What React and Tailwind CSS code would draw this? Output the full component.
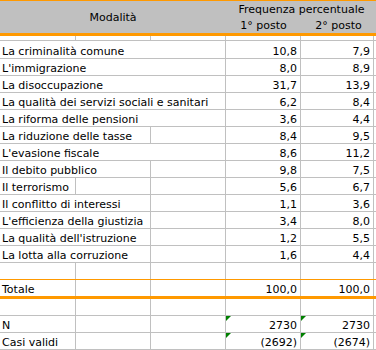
import React from 'react';

const rows = [
  { label: 'La criminalità comune', span: 3, a: '10,8', b: '7,9', tall: true },
  { label: "L'immigrazione", span: 3, a: '8,0', b: '8,9' },
  { label: 'La disoccupazione', span: 3, a: '31,7', b: '13,9' },
  { label: 'La qualità dei servizi sociali e sanitari', span: 3, a: '6,2', b: '8,4' },
  { label: 'La riforma delle pensioni', span: 3, a: '3,6', b: '4,4' },
  { label: 'La riduzione delle tasse', span: 2, a: '8,4', b: '9,5' },
  { label: "L'evasione fiscale", span: 3, a: '8,6', b: '11,2' },
  { label: 'Il debito pubblico', span: 2, a: '9,8', b: '7,5' },
  { label: 'Il terrorismo', span: 1, a: '5,6', b: '6,7' },
  { label: 'Il conflitto di interessi', span: 2, a: '1,1', b: '3,6' },
  { label: "L'efficienza della giustizia", span: 2, a: '3,4', b: '8,0' },
  { label: "La qualità dell'istruzione", span: 2, a: '1,2', b: '5,5' },
  { label: 'La lotta alla corruzione', span: 2, a: '1,6', b: '4,4' },
];

const spanClass = { 1: 'col-span-1', 2: 'col-span-2', 3: 'col-span-3' };

// one spreadsheet row: label (may spill over empty cells), then two number cells
const Row = ({ label = '', span = 1, a = '', b = '', h = 'h-[17px]', line = 'border-b border-[#c0c0c0]', flag = false }) => {
  const fillers = [];
  for (let i = span; i < 3; i++) fillers.push(i);
  return (
    <div className={`grid grid-cols-[76px_75px_75px_75px_73px] ${h} ${line}`}>
      <div className={`${spanClass[span]} border-r border-[#c0c0c0] flex items-end pl-[2px] whitespace-nowrap overflow-visible`}>
        {label}
      </div>
      {fillers.map((i) => (
        <div key={i} className="border-r border-[#c0c0c0]" />
      ))}
      <div className="relative border-r border-[#c0c0c0] flex items-end justify-end pr-[3px]">
        {flag && <span className="absolute left-0 top-0 w-0 h-0 border-t-[5px] border-r-[5px] border-t-[#008000] border-r-transparent" />}
        {a}
      </div>
      <div className="relative border-r border-[#c0c0c0] flex items-end justify-end pr-[3px]">
        {flag && <span className="absolute left-0 top-0 w-0 h-0 border-t-[5px] border-r-[5px] border-t-[#008000] border-r-transparent" />}
        {b}
      </div>
    </div>
  );
};

export default function App() {
  return (
    <div className="w-[376px] h-[350px] bg-white text-black text-[11px] leading-[13px] overflow-hidden" style={{ fontFamily: '"DejaVu Sans", Verdana, sans-serif' }}>
      {/* header */}
      <div className="border-t border-[#ff9900] border-b-[3px] border-b-[#ff9900] bg-[#c0c0c0] grid grid-cols-[226px_150px] grid-rows-[16px_16px]">
        <div className="row-span-2 flex items-center justify-center pt-[1px]">Modalità</div>
        <div className="flex items-end justify-center pl-[1px] pb-[1px]">Frequenza percentuale</div>
        <div className="grid grid-cols-[75px_75px]">
          <div className="flex items-end justify-center pb-[1px]">1° posto</div>
          <div className="flex items-end justify-center pb-[1px]">2° posto</div>
        </div>
      </div>

      {/* spacer under header */}
      <Row h="h-[5px]" span={1} />

      {rows.map((r) => (
        <Row key={r.label} label={r.label} span={r.span} a={r.a} b={r.b} h={r.tall ? 'h-[18px]' : 'h-[17px]'} />
      ))}

      <Row line="border-b border-[#ff9900]" />
      <Row label="Totale" a="100,0" b="100,0" h="h-[19px]" line="border-b-[3px] border-[#ff9900]" />
      <Row />
      <Row label="N" a="2730" b="2730" flag />
      <Row label="Casi validi" a="(2692)" b="(2674)" flag />
    </div>
  );
}
